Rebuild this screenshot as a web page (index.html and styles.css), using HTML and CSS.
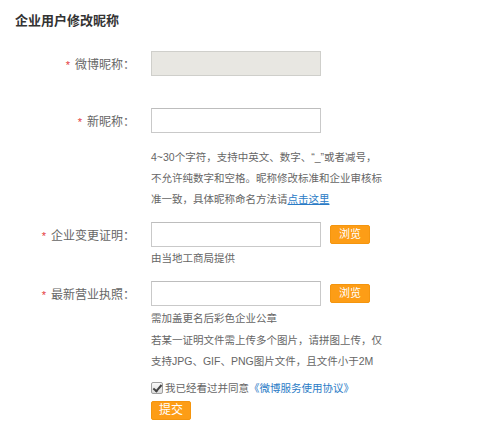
FILE: index.html
```html
<!DOCTYPE html>
<html lang="zh-CN">
<head>
<meta charset="utf-8">
<title>企业用户修改昵称</title>
<link rel="stylesheet" href="styles.css">
</head>
<body>
<h1 class="title">企业用户修改昵称</h1>
<form class="form">
  <div class="row row-first">
    <label class="label"><span class="req">*</span>微博昵称：</label>
    <input class="text disabled" type="text" disabled>
  </div>
  <div class="row row-gap2">
    <label class="label"><span class="req">*</span>新昵称：</label>
    <input class="text" type="text">
  </div>
  <p class="hint hint-nick">4~30个字符，支持中英文、数字、“_”或者减号，<br>不允许纯数字和空格。昵称修改标准和企业审核标<br>准一致，具体昵称命名方法请<a class="link underline" href="#">点击这里</a></p>
  <div class="row row-gap3">
    <label class="label"><span class="req">*</span>企业变更证明：</label>
    <input class="text" type="text">
    <button class="btn browse" type="button">浏览</button>
  </div>
  <p class="hint hint-one">由当地工商局提供</p>
  <div class="row row-gap4">
    <label class="label"><span class="req">*</span>最新营业执照：</label>
    <input class="text" type="text">
    <button class="btn browse" type="button">浏览</button>
  </div>
  <p class="hint hint-lic">需加盖更名后彩色企业公章<br>若某一证明文件需上传多个图片，请拼图上传，仅<br>支持JPG、GIF、PNG图片文件，且文件小于2M</p>
  <div class="agree">
    <input class="check" type="checkbox" checked>我已经看过并同意<a class="link" href="#">《微博服务使用协议》</a>
  </div>
  <div class="submit-row">
    <button class="btn submit" type="submit">提交</button>
  </div>
</form>
</body>
</html>
```
FILE: styles.css
```css
body {
  margin: 0;
  padding: 0 0 0 15px;
  background: #fff;
  font-family: "Liberation Sans", "Noto Sans CJK SC", sans-serif;
  color: #666;
}

.title {
  margin: 0;
  padding-top: 12px;
  font-size: 13px;
  line-height: 18px;
  font-weight: bold;
  color: #333;
}

.form {
  margin: 0;
}

.row {
  display: flex;
  align-items: center;
}

.row-first { margin-top: 21px; }
.row-gap2 { margin-top: 32px; }
.row-gap3 { margin-top: 12px; }
.row-gap4 { margin-top: 12px; }

.label {
  width: 120px;
  margin-right: 16px;
  text-align: right;
  font-size: 12px;
  color: #666;
  white-space: nowrap;
}

.req {
  color: #e4393c;
  font-size: 11px;
  margin-right: 5px;
}

.text {
  box-sizing: border-box;
  width: 170px;
  height: 25px;
  margin: 0;
  padding: 0 4px;
  border: 1px solid #c9c9c9;
  border-top-color: #bdbdbd;
  background: #fff;
  font: inherit;
}

.text.disabled {
  background: #e8e7e2;
  border-color: #cfcfcb;
}

.btn {
  box-sizing: border-box;
  margin: 0;
  padding: 0;
  border: 1px solid #f4950e;
  border-radius: 2px;
  background: #fd9d16;
  color: #fff;
  font-family: "Liberation Sans", "Noto Sans CJK SC", sans-serif;
  font-size: 11px;
  cursor: pointer;
}

.browse {
  width: 40px;
  height: 19px;
  margin-left: 9px;
  line-height: 17px;
}

.hint {
  margin: 0 0 0 136px;
  font-size: 10.5px;
  line-height: 21px;
  color: #666;
}

.hint-nick { margin-top: 14px; }
.hint-one { margin-top: 1px; }
.hint-lic { margin-top: 2px; line-height: 21.5px; }

.link {
  color: #2a7bc6;
  text-decoration: none;
}

.link.underline {
  text-decoration: underline;
}

.agree {
  margin: 5px 0 0 136px;
  font-size: 10.5px;
  line-height: 21px;
  color: #666;
  display: flex;
  align-items: center;
}

.check {
  appearance: none;
  -webkit-appearance: none;
  position: relative;
  box-sizing: border-box;
  width: 12px;
  height: 12px;
  margin: 0 2px 0 0;
  border: 1px solid #a0a0a0;
  border-radius: 2px;
  background: linear-gradient(#fafafa, #dcdcdc);
}

.check:checked::after {
  content: "";
  position: absolute;
  left: 3px;
  top: 0px;
  width: 3px;
  height: 7px;
  border: solid #444;
  border-width: 0 2px 2px 0;
  transform: rotate(40deg);
}

.submit-row {
  margin: 1px 0 0 136px;
}

.submit {
  width: 40px;
  height: 19px;
  font-size: 12px;
  line-height: 17px;
}
```
